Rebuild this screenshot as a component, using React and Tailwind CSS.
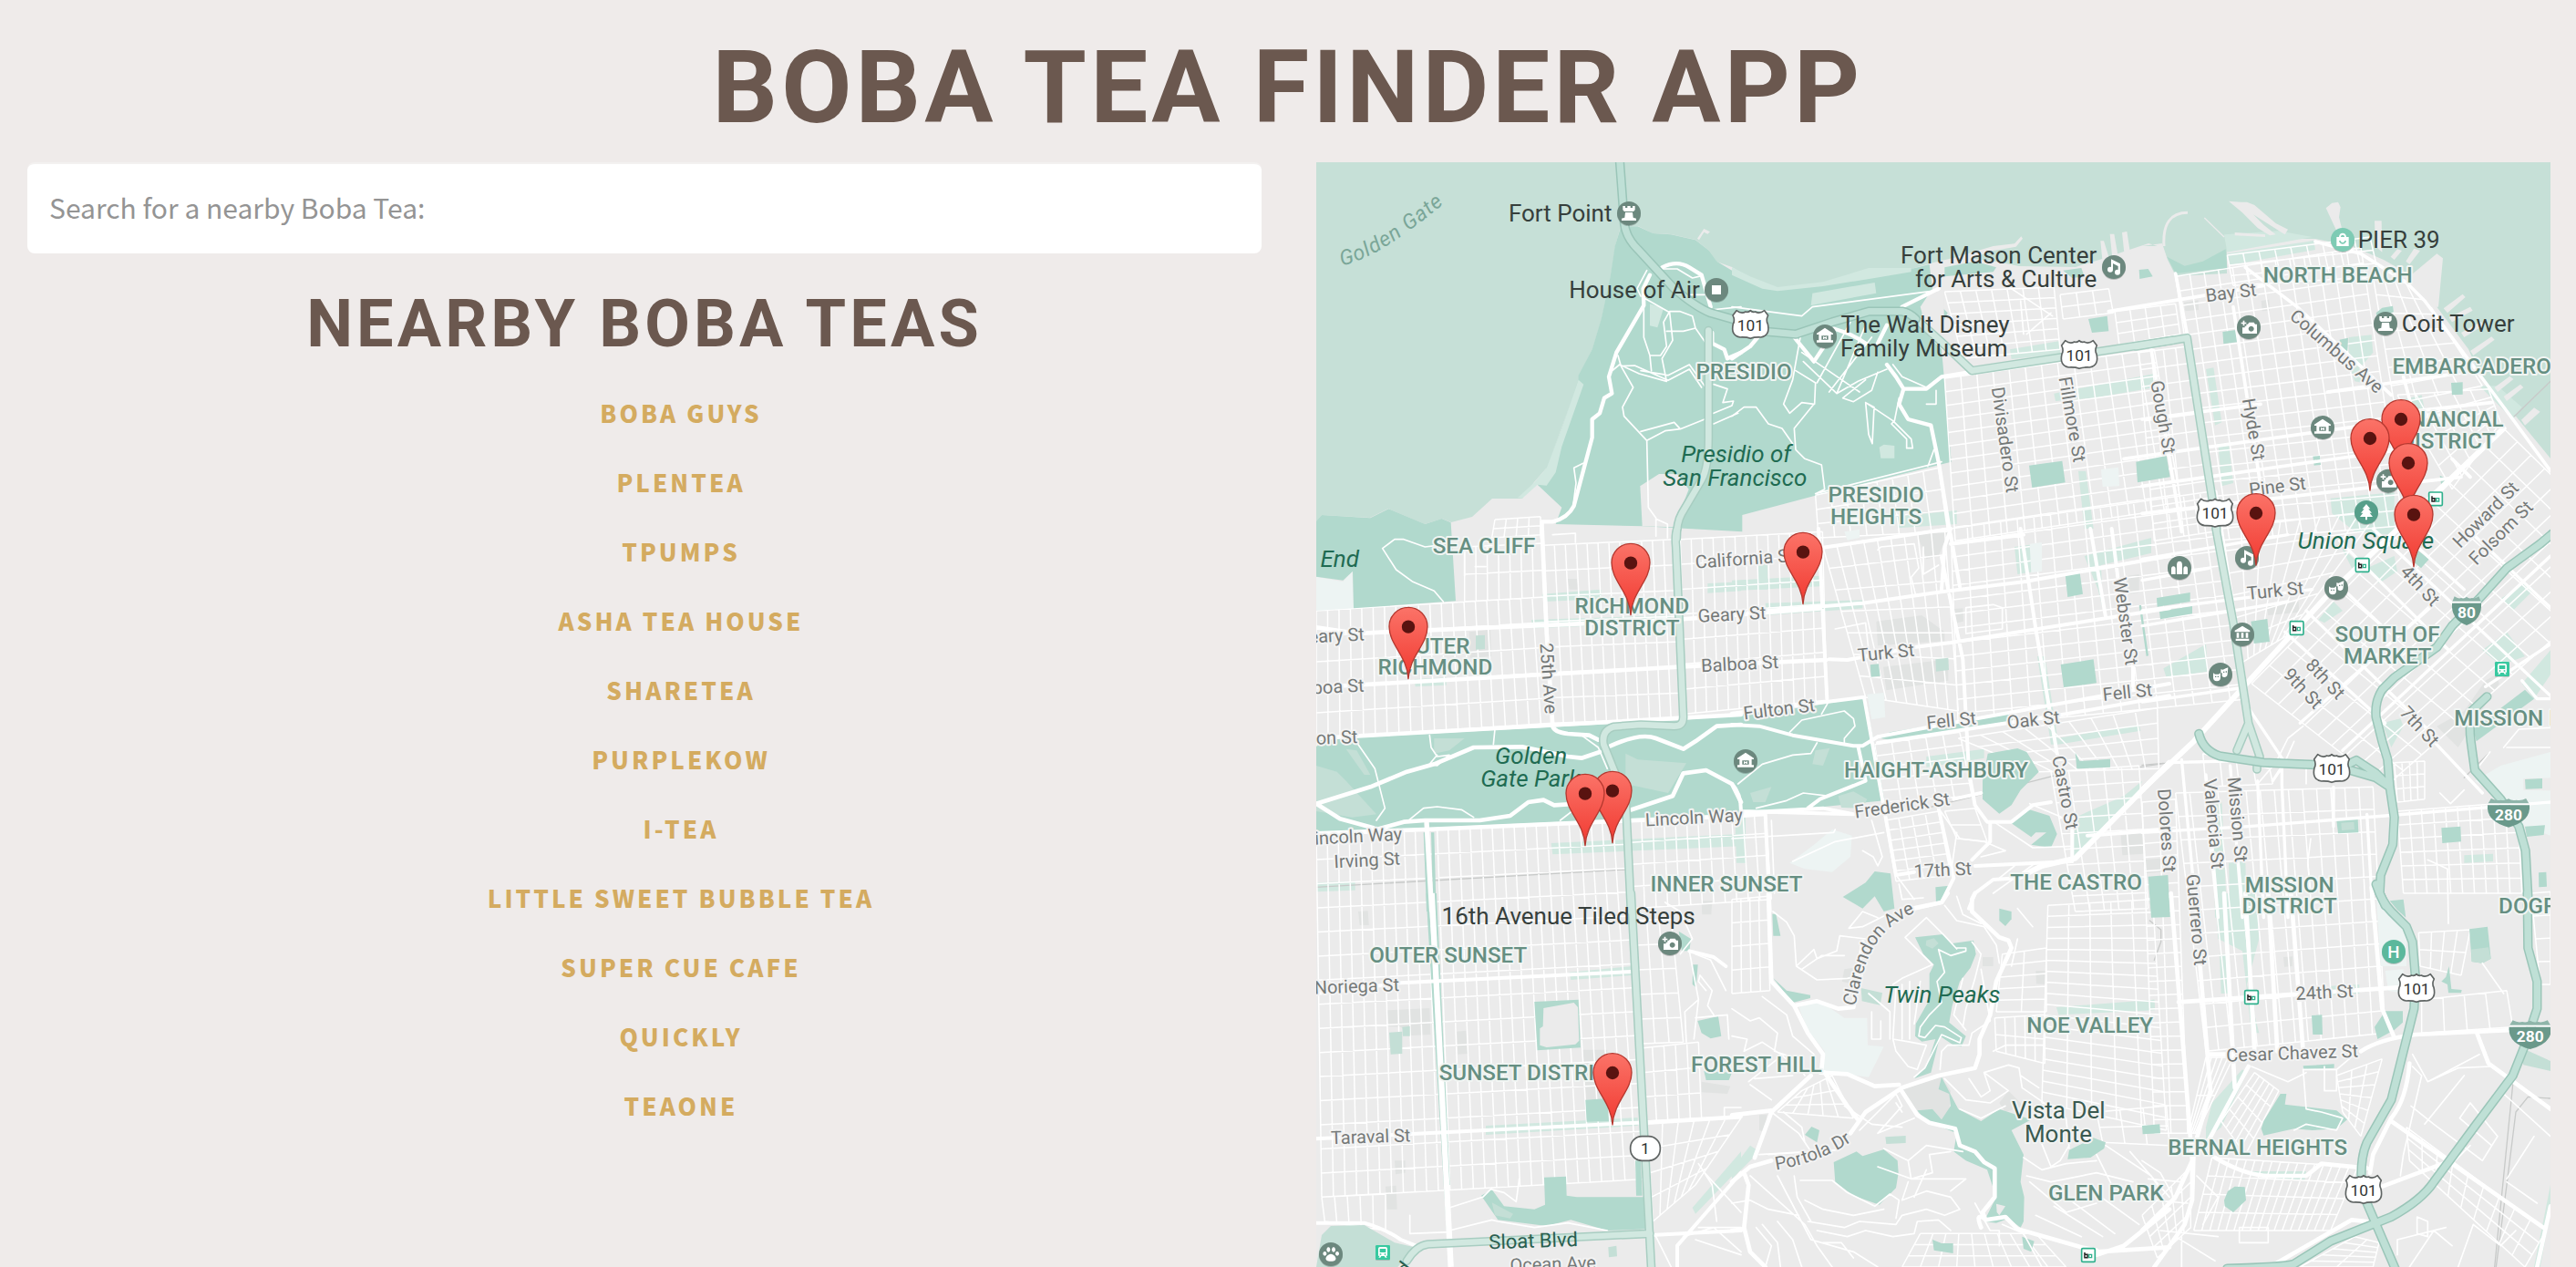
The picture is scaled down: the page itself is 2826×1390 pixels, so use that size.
import React from "react";

const SHOPS = [
  "Boba Guys",
  "Plentea",
  "TPumps",
  "Asha Tea House",
  "Sharetea",
  "PurpleKow",
  "i-Tea",
  "Little Sweet Bubble Tea",
  "Super Cue Cafe",
  "Quickly",
  "TeaOne",
];

/* ---------- map geometry: nine tiles, each drawn at three units per pixel ---------- */

const ORIGIN = {
  A: [1430, 170], B: [1900, 170], C: [2350, 170],
  D: [1430, 580], E: [1900, 580], F: [2350, 580],
  G: [1430, 980], H: [1900, 980], I: [2350, 980],
};

function Tile({ id, children }) {
  const [x, y] = ORIGIN[id];
  return <g transform={`translate(${x} ${y}) scale(0.33333)`}>{children}</g>;
}

// Street grid spread evenly over a four-cornered block.
function gridPath([tl, tr, br, bl, cols, rows]) {
  const mix = (a, b, t) => [a[0] + (b[0] - a[0]) * t, a[1] + (b[1] - a[1]) * t];
  const seg = (a, b) => `M${a[0].toFixed(1)} ${a[1].toFixed(1)}L${b[0].toFixed(1)} ${b[1].toFixed(1)}`;
  let d = "";
  for (let i = 0; i <= cols; i++) d += seg(mix(tl, tr, i / cols), mix(bl, br, i / cols));
  for (let j = 0; j <= rows; j++) d += seg(mix(tl, bl, j / rows), mix(tr, br, j / rows));
  return d;
}

const PRESIDIO = {
  A: [
    "1045,235 1100,235 1150,258 1210,262 1290,280 1335,315 1360,350 1410,380 1560,445 1710,430 1860,385 2000,375 2060,360 2070,440 2030,500 2060,600 2100,640 2110,750 2132,1010 1690,1120 1444,1185 1444,1240 1115,1222 830,1215 850,1160 770,1085 800,1030 850,900 905,740 905,725 950,640 980,540 1010,400 1025,300",
  ],
};

const PARKS = {
  B: [
    "978,1022 1087,1007 1097,1078 988,1095",
    "1173,540 1235,530 1240,580 1185,585",
    "700,370 800,350 870,370 860,385 700,400",
    "1090,380 1150,372 1160,400 1120,405",
    "650,500 680,490 710,520 690,560 660,540",
    "1340,378 1370,375 1385,400 1342,408",
  ],
  C: [
    "-20,1010 80,990 92,1060 -15,1078",
    "265,582 315,575 318,615 268,622",
    "82,335 110,390 280,372 275,310 200,350 140,365",
    "650,608 678,602 676,645 652,640",
    "1017,750 1055,748 1055,788 1020,790",
    "770,520 790,503 825,497 828,517 775,540",
    "562,992 585,990 588,1020 566,1022",
    "980,1055 1010,1070 985,1090",
  ],
  D: [
    "42,-25 60,-45 220,-35 280,-65 400,-15 455,-33 485,-20 501,238 165,262 162,140 130,170 42,158",
    "42,695 1250,630 1630,590 1850,555 1912,895 1660,920 1410,940 230,992 42,1005",
    "395,1000 405,1000 422,1260 405,1260",
    "420,1000 430,1000 437,1260 427,1260",
  ],
  E: [
    "490,690 520,670 920,605 925,632 520,695",
    "842,740 940,723 970,735 1010,800 950,860 920,910 880,938 825,890 825,830",
    "918,968 980,925 1045,945 1070,1005 1050,1050 985,1040 1035,1000 1000,1000 985,1015",
    "1082,447 1190,430 1200,508 1092,522",
    "1097,150 1145,145 1155,215 1105,225",
    "1130,737 1145,765 1245,758 1245,785 1135,790",
    "365,1212 440,1165 470,1128 522,1135 535,1250 500,1260 470,1210 430,1250",
    "670,1180 715,1175 700,1220 672,1230",
    "455,448 483,445 488,485 458,488",
    "1340,252 1347,252 1371,418 1364,420",
  ],
  F: [
    "48,228 158,210 158,240 50,257",
    "57,272 165,255 165,280 60,298",
    "358,305 412,297 420,372 368,378",
    "640,960 710,955 712,1000 645,1003",
    "985,985 1048,980 1050,1030 988,1035",
    "1260,825 1317,822 1317,855 1262,857",
    "1260,980 1326,976 1322,1008 1266,1014",
    "20,1145 85,1140 92,1278 30,1280",
    "1305,1132 1330,1130 1332,1178 1306,1180",
    "905,70 945,100 918,130 895,110",
    "815,1225 860,1220 868,1280 840,1255",
    "1090,660 1260,530 1290,560 1100,700",
  ],
  G: [
    "760,357 905,350 912,508 770,517",
    "928,680 1000,675 1005,750 932,752",
    "585,995 620,975 660,1030 760,1040 795,1025 792,935 864,932 866,995 900,1000 1130,1000 1140,1105 1000,1110 880,1075 800,1095 640,1075",
    "1235,125 1275,150 1270,190 1245,190",
    "1282,235 1298,235 1292,310 1280,300",
    "1297,420 1365,405 1375,470 1340,478 1310,460",
    "1318,585 1410,590 1400,615 1325,615",
    "1092,880 1110,880 1115,995 1095,995",
    "403,0 411,0 490,1230 478,1230",
    "430,0 438,0 482,960 474,960",
  ],
  H: [
    "603,145 695,135 725,165 795,155 803,200 785,245 750,290 725,370 715,425 770,470 755,505 730,500 685,470 655,590 600,610 640,570 670,480 625,488 603,470 605,430 650,350 650,265 665,235 630,200",
    "690,605 745,710 820,750 880,710 985,745 920,780 960,860 950,950 962,1000 960,1080 950,1100 910,1070 870,1085 830,1080 870,1000 840,910 770,880 730,850 740,790 640,750 610,715 660,710 690,745 720,700 715,660 680,645",
    "335,885 410,850 430,865 500,843 545,880 548,920 540,970 485,1025 400,995 340,950",
    "1105,875 1110,845 1190,805 1230,820 1225,840 1180,870",
    "880,50 920,60 920,85 900,108 880,90",
    "133,68 145,68 160,140 136,140",
    "240,795 262,768 288,780 280,820",
    "135,278 180,320 258,335 258,345 200,360",
    "660,1140 690,1152 728,1152 728,1185 665,1175",
    "955,1130 995,1145 985,1180 960,1170",
    "1350,765 1408,760 1410,790 1352,793",
  ],
  I: [
    "400,750 455,660 475,660 470,695 640,715 675,745 640,775 560,780 500,775 400,797 392,775",
    "270,1010 282,980 305,965 338,967 342,1010 300,1050 272,1030",
    "765,440 800,388 858,388 858,425 830,450 775,480",
    "1077,118 1137,110 1148,215 1120,230 1085,225",
    "985,290 1000,275 1010,240 1018,315 1052,318 1050,328 1008,328 1005,300",
    "558,402 592,400 594,465 562,465",
    "530,568 632,562 632,575 532,580",
  ],
};

const PALE = {
  A: ["1140,490 1185,505 1165,568 1140,562", "905,740 922,755 850,960 830,1045 800,1088 770,1085 720,1130 705,1128 760,1078 800,1030 850,900"],
  B: ["265,455 470,420 475,455 260,495", "485,962 500,953 535,957 535,998 490,998", "0,370 60,400 150,435 300,418 450,372 590,372 590,385 470,405 300,432 150,448 100,440 0,395", "1060,785 1390,720 1392,765 1190,800 1065,810", "1140,1040 1165,1040 1190,1230 1160,1230", "540,1190 740,1170 740,1215 545,1228", "915,640 1080,612 1080,655 920,672"],
  C: ["210,705 235,700 262,880 240,890", "250,950 285,950 300,1080 262,1090", "280,325 565,282 570,312 290,362", "680,600 755,592 760,650 700,720 680,700", "840,810 920,790 930,840 860,850", "620,1130 830,1110 830,1250 700,1240 625,1180", "270,262 450,250 560,270 280,320", "1170,760 1250,830 1220,870 1110,760", "680,690 745,720 780,760 700,745"],
  D: ["785,215 980,200 980,232 790,240", "750,300 1210,285 1210,310 755,328", "1330,180 1440,175 1440,205 1330,212", "365,495 470,490 470,515 368,520", "815,1035 1440,1005 1440,1045 820,1072", "42,1165 170,1160 170,1190 42,1195"],
  E: ["0,170 290,155 290,190 0,205", "110,245 430,235 430,262 115,285", "930,60 1000,50 1000,140 940,150", "1160,90 1380,30 1380,80 1215,120 1220,260 1205,200", "1005,420 1030,420 1075,710 1050,710", "640,750 830,725 830,755 640,785", "1070,690 1340,645 1345,665 1075,710", "1130,950 1290,880 1350,830 1340,860 1200,1010 1120,1100", "10,950 45,950 45,1100 15,1100", "85,95 118,95 118,200 88,200"],
  F: ["740,130 830,90 840,140 780,180", "580,300 630,240 660,270 600,310", "70,460 210,380 215,470 80,490", "1120,400 1200,340 1260,420 1180,450", "1180,230 1260,180 1290,200 1220,270", "790,640 850,625 860,650 820,720", "235,900 262,900 280,1280 240,1280", "285,1100 340,1095 345,1280 290,1280", "1060,1075 1155,1070 1155,1095 1060,1100", "1250,510 1344,400 1344,480 1290,560", "655,60 720,120 690,130"],
  G: ["875,260 1080,240 1080,270 880,285", "600,765 1100,738 1100,765 600,795", "1280,1035 1440,850 1440,900 1290,1055"],
  H: ["1068,375 1390,350 1392,385 1075,400", "0,910 60,830 90,850 0,940"],
  I: ["240,0 375,0 385,150 345,300 385,460 360,460 330,190 250,150", "210,770 230,690 330,580 345,590 260,770 210,810", "350,915 540,915 535,945 360,930", "1290,1230 1344,960 1344,1050 1310,1230", "255,200 280,200 290,330 260,330", "620,305 715,300 715,330 625,335", "0,355 40,350 42,380 0,385"],
};

const MINT = {
  D: ["42,780 110,800 140,830 240,940 160,950 42,930", "430,690 530,690 480,730 430,740", "1060,740 1100,760 1260,772 1200,870 1060,840", "140,725 175,730 220,810 200,810", "567,352 597,350 597,396 567,398"],
  E: ["275,730 322,722 300,780 265,775", "350,880 400,865 445,890 430,920 360,918", "60,870 130,850 110,900 70,900", "670,430 712,425 714,465 672,470"],
  F: ["655,968 697,965 699,990 657,993"],
  G: ["60,1125 90,1095 200,1092 240,1115 300,1150 365,1165 310,1230 42,1230", "620,1018 690,1055 680,1070 630,1060", "282,458 325,455 325,528 287,530", "325,440 350,437 350,470 327,470", "1003,1165 1030,1160 1032,1195 1005,1198"],
  H: ["505,802 572,798 572,822 508,825", "425,312 495,328 488,368 428,355", "640,155 665,148 680,165 660,182 638,172"],
  I: ["1240,505 1344,552 1344,585 1255,565", "1083,185 1140,178 1148,215 1120,230 1085,225"],
};

const GREY = {
  D: ["545,340 615,333 618,420 548,425", "870,165 900,165 905,200 875,200"],
  E: ["475,305 625,285 700,340 700,370 480,385", "498,455 712,430 712,500 508,532", "610,20 715,5 680,90 640,100", "725,265 760,262 762,305 730,312", "1280,1010 1350,1000 1355,1070 1285,1075", "1300,155 1340,150 1340,210 1305,215"],
  C: ["138,485 185,478 186,510 142,514", "392,480 418,476 420,512 395,514"],
  F: ["410,255 515,240 517,275 415,285", "1060,600 1130,500 1165,480 1175,510 1040,720 1020,700 970,650", "0,1090 60,1085 62,1130 10,1135"],
  G: ["275,385 415,378 418,465 355,468 320,440 280,438", "505,455 535,452 540,528 508,530", "920,515 1000,515 1005,680 930,680", "180,60 212,58 215,105 185,105", "270,965 305,962 308,1040 275,1040", "300,880 335,880 335,920 303,925", "1310,620 1405,635 1395,660 1310,655", "1310,25 1345,25 1342,70 1312,70"],
  H: ["560,645 690,605 720,650 715,720 690,745 660,710 610,715", "370,250 400,245 400,300 362,290", "825,210 860,210 860,240 825,240", "880,690 910,650 960,700 900,720", "90,730 115,728 110,785 90,780", "1000,255 1035,255 1035,300 1002,298"],
  I: ["465,210 495,208 495,240 468,242"],
};

const CAMPUS = {
  D: ["42,158 130,175 160,140 165,262 42,270"],
  E: ["445,545 500,540 505,620 460,628", "190,1100 270,1040 330,990 395,1010 390,1080 330,1130 240,1120", "370,10 420,2 420,30 380,38", "980,50 1020,45 1020,140 985,145"],
  F: ["1095,830 1180,780 1344,735 1344,820 1255,822 1255,860 1344,862 1344,1010 1260,980 1170,880"],
  B: ["1215,1035 1272,1028 1275,1090 1220,1092"],
  H: ["220,375 290,355 370,410 445,410 447,500 500,505 450,605 300,585 305,520 250,450"],
  I: ["770,0 800,50 870,120 870,240 785,240", "800,255 860,250 860,330 810,320"],
};

const LAND = {
  A: ["1108,1090 1170,1050 1230,1050 1268,1100 1220,1225 1115,1222", "1296,275 1318,243 1338,253 1330,260 1318,254 1302,280"],
  B: ["1213,283 1224,283 1245,350 1220,355", "1244,260 1258,260 1272,340 1252,340", "1284,255 1300,252 1312,330 1292,330", "740,335 860,300 930,292 952,268 957,275 935,302 860,315 760,350", "630,500 665,465 698,440 698,700 690,600 650,560 622,540"],
  C: [
    "285,152 330,190 380,240 420,265 440,262 400,230 330,160 322,168 470,262 480,245 440,225 370,165 345,155 325,155",
    "605,175 625,158 645,155 653,172 648,205 658,245 640,250",
    "765,217 788,217 790,320 768,300", "840,310 855,315 830,345 818,335", "895,308 915,315 880,360 868,350",
    "970,325 990,340 975,500 950,500 880,425 880,400",
    "1055,458 1064,468 1005,520 992,505", "1080,500 1088,512 1020,550 1010,535", "1115,548 1125,560 1060,600 1050,585", "1150,598 1160,608 1090,660 1080,645",
    "1210,728 1222,738 1170,780 1160,765", "1245,755 1255,765 1200,810 1190,795", "1290,832 1310,845 1260,890 1248,872",
    "305,255 405,262 405,270 305,265",
  ],
  G: ["790,378 890,360 903,375 907,485 895,497 800,507 778,500 778,445 788,438"],
  H: ["870,1022 900,1030 880,1060 872,1050"],
};

const GRIDS = {
  D: [
    [[42, 270], [790, 225], [820, 640], [42, 690], 20, 5],
    [[530, 60], [790, 48], [795, 225], [530, 240], 7, 2],
    [[790, 55], [1220, 35], [1245, 625], [820, 640], 12, 7],
    [[1240, 35], [1708, 10], [1722, 565], [1255, 610], 13, 7],
    [[630, -30], [780, -40], [780, 20], [620, 30], 4, 2],
  ],
  E: [
    [[300, 60], [700, 0], [745, 600], [440, 555], 9, 7],
    [[720, 0], [1595, -125], [1700, 560], [745, 655], 16, 14],
    [[745, 690], [1400, 590], [1405, 790], [1010, 800], 9, 4],
    [[470, 710], [750, 670], [790, 880], [498, 900], 5, 5],
    [[505, 960], [680, 930], [720, 1140], [540, 1160], 4, 6],
    [[1050, 800], [1340, 780], [1370, 1250], [1130, 1260], 5, 9],
    [[700, 930], [800, 920], [840, 1030], [740, 1020], 1, 2],
  ],
  B: [
    [[700, 450], [1060, 435], [1080, 640], [760, 670], 7, 6],
    [[700, 735], [1390, 640], [1480, 1160], [735, 1270], 13, 12],
    [[275, 1120], [680, 1030], [710, 1240], [285, 1260], 8, 3],
    [[1080, 460], [1240, 440], [1255, 520], [1090, 540], 3, 2],
  ],
  C: [
    [[-90, 515], [110, 490], [125, 590], [-75, 625], 4, 3],
    [[-10, 650], [150, 630], [235, 1240], [40, 1270], 4, 11],
    [[110, 400], [720, 305], [860, 1220], [240, 1270], 13, 18],
    [[280, 330], [750, 270], [780, 400], [300, 430], 9, 3],
    [[760, 400], [905, 430], [1120, 760], [830, 820], 4, 7],
    [[840, 790], [1140, 770], [1180, 880], [1020, 1100], 5, 4],
  ],
  F: [
    [[1190, -330], [1640, 110], [800, 850], [360, 510], 10, 14],
    [[260, 0], [780, -60], [480, 350], [330, 440], 8, 6],
    [[200, 740], [420, 790], [430, 840], [210, 850], 4, 1],
    [[830, 770], [930, 765], [930, 890], [840, 900], 4, 3],
  ],
  G: [
    [[42, -190], [1055, -240], [1135, 940], [60, 1000], 28, 15],
    [[1075, -240], [1520, -270], [1540, 20], [1085, 50], 12, 4],
    [[1090, 90], [1210, 85], [1250, 490], [1110, 495], 3, 5],
    [[1110, 510], [1300, 490], [1310, 740], [1125, 750], 5, 3],
    [[1130, 760], [1440, 740], [1290, 960], [1150, 1080], 6, 4],
    [[60, 1000], [270, 990], [270, 1110], [70, 1080], 5, 1],
  ],
  H: [
    [[1040, 40], [1385, 20], [1430, 780], [1020, 690], 5, 18],
    [[865, 410], [1030, 400], [1030, 560], [870, 520], 5, 2],
    [[890, 200], [1035, 180], [1035, 390], [870, 390], 2, 5],
    [[1200, 720], [1430, 700], [1440, 830], [1220, 820], 3, 2],
    [[0, 20], [118, 10], [125, 320], [0, 330], 4, 4],
    [[620, 1120], [1000, 1120], [1100, 1230], [560, 1230], 9, 3],
    [[230, 650], [330, 600], [400, 740], [150, 720], 5, 3],
  ],
  I: [
    [[0, -300], [110, -310], [150, 790], [40, 790], 2, 24],
    [[110, -330], [760, -350], [800, 460], [210, 520], 14, 11],
    [[840, -270], [1235, -300], [1250, 0], [860, 0], 10, 6],
    [[910, 130], [1080, 120], [1050, 270], [915, 240], 4, 2],
    [[920, 350], [1200, 320], [1220, 440], [920, 460], 4, 1],
    [[640, 600], [790, 545], [720, 800], [660, 720], 3, 6],
    [[230, 870], [710, 900], [620, 1110], [170, 1110], 17, 4],
    [[370, 590], [450, 650], [340, 860], [260, 750], 5, 4],
    [[150, 790], [210, 540], [300, 540], [180, 790], 2, 5],
    [[870, 770], [1330, 1110], [1260, 1230], [880, 880], 9, 3],
    [[0, 1060], [160, 900], [160, 1100], [50, 1200], 5, 4],
    [[1280, 0], [1344, -5], [1344, 300], [1310, 300], 1, 4],
    [[520, 1230], [700, 1130], [780, 1150], [760, 1230], 5, 2],
  ],
};

const LANES = {
  A: "M1120,465V600L1140,660H1175L1195,630 1185,550 1205,515 1240,515 1280,530 1290,570 1250,580H1195M1120,470L1205,518 1215,610 1180,670 1195,745 1105,720 1040,690 1010,715M1035,660L1045,695 1085,765 1050,830 1055,860 1130,940 1135,1160 1160,1195V1255M1110,710L1200,725 1270,690 1320,760M1045,695L1090,693 1200,742 1270,705 1310,765M1140,660L1145,710M1110,910L1220,880 1240,902 1320,870M1130,940L1190,908 1240,902M1350,850L1410,825 1415,810 1380,815 1395,770 1350,755M1350,885L1430,850M1180,375L1230,375 1280,405 1310,398M1225,440L1260,460H1320M1130,380L1098,440 1110,465M920,1015L890,1030 897,1080 888,1150M1340,510L1440,500M1290,570L1325,620M1160,1198L1198,1215V1260",
  B: "M0,500L230,530 265,500 680,445M225,600L200,740 170,820 190,850 230,815 270,820 205,900 210,970 240,1000 295,1020 305,1100 275,1115M0,860L40,830 80,830 120,885 165,900 200,950M235,680L345,785 440,560M280,750L390,550M320,780L460,600M210,710L275,750 272,820M345,785L415,745 510,705M365,800L440,740M365,800L400,812 460,775 480,715M440,815L450,920 462,950 468,830ZM440,815L530,875 590,935 595,965 575,965V935L525,885 535,875 550,800M530,690L560,730 640,765 680,735M230,650L420,780M640,820H672V775M275,1115L690,1010M665,970L645,1025M905,430L1055,530M950,480L960,590M1050,520L970,590",
  D: "M260,65L300,35 330,35 400,60 440,55M260,65L305,135 360,175 430,205 460,240M415,680L420,720 440,750 480,745 440,780 415,775 440,745M630,660L625,710M180,710L235,790 268,920 240,960M340,965L395,920 440,915 520,925 560,950M915,680L970,720 1000,790M530,155V60M565,125H600M820,20L895,15V45M845,960L890,925",
  E: "M190,670L230,630 370,600 400,625 405,650 370,690V710M295,610L315,575M280,705L260,740 200,745 100,775 20,840M80,920L180,895 235,870 320,880M340,990L335,1000 0,1020M480,70L490,60 600,50 615,130 590,160 605,220M630,60V150L680,120M770,340V260L860,250 890,260V330L770,345M340,330L440,310 450,400M870,970L990,1050 1120,1045M980,905L1110,960M680,920L750,1020 830,1030 900,1060 820,1080M430,1060L465,1080 480,1110 495,1080 460,960M550,1170L560,1220 630,1215M740,1000L720,1140M540,1140L600,1220M130,960L140,1200M200,1095L340,1030 500,1000M930,1110L880,1150M1000,1100L860,1200",
  F: "M380,840L440,770 480,690 530,650M540,840V780M1190,720L1240,660 1344,655M1200,720H1344M1110,780L1145,735M980,870L1015,905 1060,860M555,1020L545,1100 555,1200M460,790L500,700",
  G: "M480,1035L590,1000 620,970M480,1110L620,1075 640,1080 760,1100 870,1085 1000,1110M620,975L660,985 700,1015 710,940M350,1120L480,1115M350,1060V1120M1190,30L1240,60 1280,150 1240,200M1270,190L1300,350 1255,390 1260,490M1290,200L1340,220 1390,320M1305,270L1345,320 1330,370 1350,400M1300,350L1285,480M1305,270L1300,290 1325,320M1290,410L1395,400 1400,480M1320,920L1440,1050M1300,1100L1440,1100M1250,1130L1350,1100 1440,1180M1300,890L1345,960 1360,1080M1385,740V705H1440M1160,1130L1210,1230M1290,1140L1440,1190",
  H: "M135,60L180,95 205,140 212,240 280,285 380,280 430,270M212,240L270,185 280,215 345,190 355,140 440,150M230,250L295,205 370,205M385,115L430,60 480,80M385,115L430,110 500,75M570,145L640,80 700,140M570,145L660,235 560,280 530,300M740,180L770,180 770,190 720,205 680,185 700,260 675,290 690,360 650,400 620,440 615,470 635,475 670,435 700,440 755,475 750,492 690,465 635,575 600,605M700,140L740,183M700,40L740,90 830,110 870,170 880,230M740,10L760,70 820,100M790,160L820,200 800,280 770,380 760,440M760,280L730,400 770,450M820,250L850,420 790,460 780,500 710,500 690,520 685,580M540,310L530,480 590,490 640,500 610,580 580,570 540,520 530,480M560,300V480M585,290V480M620,290L600,430M450,330L520,390V480M460,390V480H490V420M0,380L60,420 90,410 150,460 140,520 200,540 240,600M0,470L50,480 40,520 100,490 160,530 220,580M100,340L180,400 200,470 270,530M55,620L170,530M60,630L130,680M75,610L200,600M170,720L230,770 240,820M130,720L220,790 260,850 120,860M90,860L350,845M420,780L540,660 560,700 480,790 600,740M540,690L560,720M500,840L580,880 590,940 660,920 650,860 720,850M580,880L640,830 760,850M580,950L560,1010 640,980 720,1000 750,1040 700,1060 640,1040 560,1060 540,1090 420,1080 370,1100 250,1080M150,930L260,1140 400,1180 480,1230M225,945H330L380,985 470,1030 520,990 550,1010 540,1070M240,1010L300,1040 400,1060 500,1040M205,930L215,1000 260,1080M60,930L150,1010 240,1090 280,1160 330,1230M0,1020L60,1010 120,1040 220,1060M280,1110L380,1130 440,1110 530,1130 600,1120 610,1080 680,1075 720,1110M300,1150L360,1150 400,1200M80,1100L130,1160 110,1230M100,1090L150,1150 160,1230M150,1080L200,1140 230,1230M370,700L460,760 560,770M700,610L770,680 850,690 910,650 830,590M780,610L820,670 850,650 830,590 910,565 945,575 955,640 1100,740 1110,840M750,710L820,740 900,700M1110,830L1080,880 1050,900 1010,800M960,870L1020,910 1100,890 1200,880M970,930L1050,950 1200,920 1320,950M1230,830L1380,930 1400,960M1200,860L1260,980M980,950L1100,1050 1200,1020M1000,1060L1150,1130M1060,1030L1220,1130M1100,1000L1260,1120M1160,960L1340,1090M890,1090L960,1120 1020,1230M640,910L600,1000M800,1020L850,1110H880V1160M950,600L1010,640M1310,850L1440,1000M860,520L900,500 1030,500M480,900L590,940 770,940 720,980M940,150L920,240M940,50L990,110",
  I: "M890,530L940,620 1040,575 1145,570M890,570L920,600 860,860 850,930M885,700L960,760 1120,880 1170,800 1080,690 1045,740 1150,830M1120,230L1190,330M940,620L1110,530M700,530L640,580M500,780L540,760 640,780 660,740 590,720 540,710 530,580H640V650M360,570L480,620 540,590M600,570V650H640M950,960L1080,830M1090,1090L1180,1160 1230,1110M1090,1090L1040,1230M1200,950L1300,1020M905,1065L940,1080V1130L905,1120ZM940,-110L1005,-80 1008,100M1000,1100L840,1140V1190M880,1230L960,1110 1020,1160M1190,660L1344,800M1290,800L1200,940M930,760L1060,600M320,1100H415V1150H320ZM110,1130L240,1210M180,930L250,1000 200,1090M60,1110L250,1130M130,1130V1230M0,880L60,920 110,1010M20,940L130,950M30,1010L150,1020",
};

const ROADS = {
  A: ["M1345,585V620L1385,640 1395,670 1440,650M1140,395L1118,440 1120,495 1030,650 1005,730 1015,785 990,800 975,850 950,870V930L890,1155Q870,1195 820,1207H785V1260M1180,370Q1230,345 1270,370L1310,395 1340,500", 13],
  B: ["M0,670L60,630 85,600M205,600L270,680 300,635M330,570Q400,590 440,620M560,500L650,455 680,440M510,560L480,620M510,690L540,730 565,770 550,820 580,870 655,890 680,1010 720,1260M565,770L640,770 690,730 780,715", 13],
  C: ["M-110,515L400,430M340,370L510,500 820,790M570,285L720,325 870,420 930,480 1220,870 1344,1040M0,870L390,820M610,780L1030,720M1150,815L830,850M-60,1000L1020,850M300,500L390,1090M30,640L130,1240M110,390L150,600M0,1090L850,970M0,1180L1050,1060M860,730L890,840M1020,1000L1080,1060", 11],
  D: ["M785,0L800,340 820,650Q825,670 870,675L940,680 970,695M42,325L180,345 270,340 1220,300 1700,262M42,522L1290,452 1720,432M42,690L1440,612M42,905L220,850 340,800 430,775 560,720 720,718 870,750 915,755 975,735M42,905L120,955 230,985M240,990L330,965 400,960H580L680,945 740,900 790,893 825,910 980,900M42,1003L400,990 1440,945M1010,715Q1110,670 1160,690L1250,725 1290,700 1360,650 1440,645M1080,925L1215,880 1250,805 1325,795 1410,840 1440,900", 14],
  E: ["M285,0L313,560M300,62L720,0M115,270L430,245 690,208 960,175 1440,90M690,200L700,60 720,0M690,95L760,430 780,800 800,910 840,965 920,965 990,910 1050,900M720,50L960,20M950,0L1000,330 1070,740M1250,0L1270,160M1180,0L1230,290M320,430L380,432 600,390 720,375 1440,262M0,608L430,555M435,555L540,1140 600,1130M0,645L90,650 200,680 400,715 430,715 480,685 640,655 1440,510M480,705L1100,610 1440,550M415,715L440,830 290,890 250,920M30,935L300,920 400,940M0,840Q30,870 30,930L400,940M40,945L110,940 125,1260M680,920L730,1150 690,1230 560,1260M850,970L850,1030 790,1090M1120,980V1080M800,1110L1120,1095M1170,1010L1440,990M940,1150L860,1155 800,1200 780,1250M720,20L750,190M1320,450V520M730,890L820,870", 12],
  F: ["M0,100L480,20M0,170L220,130M0,270L560,200M0,320L480,240M0,570L320,525M620,160L800,330M650,40L1010,400M760,0L1344,550M1070,0L1344,260M840,0L1060,200M470,340L800,640M540,270L960,680M330,560L470,770 430,830M660,730L1344,90M520,640L960,250M90,770L280,765M0,1000L350,980 800,945 1344,900M130,760L180,1280M210,810L250,1280M290,780L330,1280M460,760V840L480,1280M380,830L400,1280M1344,380L1130,520M960,700L1120,870M1250,500L1300,560 1344,560M740,940L760,1280M630,850V980", 10],
  G: ["M42,1085H200Q270,1105 320,1140L370,1160M42,330L320,295 1080,258M42,808L1100,755 1440,735M1145,1125L1440,1110M1230,1230V1160L1300,1080 1440,920M1270,190L1350,210 1390,240", 12],
  H: ["M120,0L130,290 205,370 250,460 300,530 295,580M205,370L280,355 350,380 400,375M400,375L430,160M0,950L60,900 130,880M390,790L440,720 560,640 680,600 800,575 815,530V480L850,400 870,290 920,180 910,155 880,145 790,60 790,20 800,0M290,590L380,595 470,635 550,630M305,590L380,700 415,745M555,645L610,730 650,755 735,775 750,830 800,850 830,885 865,905V1000L825,1050 835,1075 900,1065 940,1105 1150,1165 1200,1175M40,920L55,960 40,1100 60,1180 110,1230M1200,1190L1290,1160 1440,1040M260,600L130,720 75,870M0,730L130,715M1200,1180L1440,1165M570,55L690,30 710,0M0,1110L40,1105M830,1070Q800,1050 820,1100", 14],
  I: ["M95,0L165,880 110,1000 0,1110M190,230L225,650 170,840 165,1010 140,1090 40,1230M120,358L840,310M220,530H280M720,520Q780,480 900,465L1220,450M755,-20L790,380 830,475M350,570L210,830M270,0L305,640M415,0L445,520M340,0L370,520M490,0L530,520M240,870Q340,930 420,930H540L590,890 740,905M880,560Q870,680 820,740L760,860 750,920M820,750L1320,1100M790,965L990,890M1100,455L1140,560 1344,710M1300,1230L1344,1030M420,1230L690,1075 740,1080", 14],
};

const MARKET = { F: "M1190,-330L600,230 170,700 0,860", E: "M1440,770L1130,1085 1020,1110 940,1150" };

const ARTERIAL = {
  A: "M1333,578V930Q1333,1030 1310,1070L1245,1180Q1228,1210 1228,1262",
  D: "M1230,0Q1222,20 1226,60L1250,620Q1250,650 1220,650L1110,645 1020,652Q980,665 988,710L1020,790 1060,880 1078,1260",
  G: "M1078,0L1145,1240M340,1210Q370,1160 410,1155L1140,1120",
  B: "M600,535L700,625 790,710 1450,610",
  C: "M-20,630L148,602 232,1140 245,1232",
  F: "M243,0L300,310 350,640 387,750M350,640L312,730M378,760V792",
};

const FREEWAY = {
  A: "M1040,10L1056,225Q1060,270 1100,310L1220,440Q1290,500 1340,520L1440,548",
  B: "M100,580L210,590 330,550 450,515H560Q585,520 605,540",
  F: "M187,675Q200,730 255,748L400,770 570,777M685,772L705,762 770,805 815,850M685,795L770,820 815,850M1370,0L1310,50 1200,130 1110,230 1020,320 970,390 830,490 790,530Q765,570 770,620L790,700 808,760 815,850 830,950 825,1040 785,1140 782,1200 800,1240M1135,553L1085,600Q1075,640 1082,700L1095,795 1180,890 1240,980 1262,1060 1270,1210",
  I: "M770,-30Q790,30 820,60L870,110 890,160 900,280 895,380 820,680 740,820Q718,870 722,950L740,1020 835,1240M1268,0L1270,180 1300,290V380L1260,500 1220,600 1100,760 960,950Q920,1010 820,1065L620,1145 500,1220Q470,1230 280,1235",
};

const RAIL = {
  C: "M1344,745L1225,860", E: "M640,920L820,875 1080,808M1340,785L1440,770", D: "M42,1180L1060,1122",
  I: "M1220,630L1160,1230M1344,675L1270,670 1230,720 1200,960 1165,1230M25,90L62,120V160L40,220", F: "M0,778L70,772M1140,740L1060,820",
};

/* label: [text, centre x, centre y, rotation] */
const HOODS = {
  A: [["PRESIDIO", 1449, 711]],
  B: [["PRESIDIO", 474, 1117], ["HEIGHTS", 474, 1189]],
  C: [["NORTH BEACH", 644, 393], ["EMBARCADERO", 1085, 694], ["FINANCIAL", 1006, 867], ["DISTRICT", 1006, 940]],
  D: [["SEA CLIFF", 594, 55], ["RICHMOND", 1081, 252], ["DISTRICT", 1081, 324], ["OUTER", 433, 384], ["RICHMOND", 433, 455], ["INNER SUNSET", 1392, 1167]],
  E: [["HAIGHT-ASHBURY", 672, 793], ["THE CASTRO", 1133, 1161]],
  F: [["SOUTH OF", 807, 345], ["MARKET", 808, 417], ["MISSION BAY", 1250, 622], ["MISSION", 485, 1171], ["DISTRICT", 485, 1241]],
  G: [["OUTER SUNSET", 476, 203], ["SUNSET DISTRICT", 747, 590], ["FOREST HILL", 1491, 562]],
  H: [["NOE VALLEY", 1178, 433], ["GLEN PARK", 1231, 985]],
  I: [["DOGPATCH", 1360, 40], ["BERNAL HEIGHTS", 380, 835]],
};
const STREETS = {
  B: [["Divisadero St", 900, 937, 82], ["Fillmore St", 1121, 870, 80]],
  C: [["Gough St", 70, 863, 80], ["Bay St", 292, 452, -7], ["Columbus Ave", 641, 645, 41], ["Hyde St", 368, 903, 80], ["Pine St", 445, 1090, -7], ["Howard St", 1130, 1183, -45], ["Folsom St", 1180, 1243, -45]],
  D: [["California St", 1452, 98, -4], ["Geary St", 88, 352, -3], ["Balboa St", 72, 521, -3], ["Fulton St", 60, 688, -2], ["25th Ave", 808, 493, 86], ["Geary St", 1410, 281, -3], ["Balboa St", 1436, 444, -3], ["Lincoln Way", 1285, 950, -3], ["Lincoln Way", 164, 1012, -3], ["Irving St", 209, 1090, -3]],
  E: [["Turk St", 507, 407, -6], ["Fulton St", 155, 593, -7], ["Fell St", 722, 630, -6], ["Oak St", 992, 628, -6], ["Fell St", 1302, 537, -6], ["Webster St", 1297, 305, 82], ["Frederick St", 560, 910, -8], ["17th St", 694, 1122, -3], ["Castro St", 1098, 868, 79]],
  F: [["Dolores St", 82, 993, 86], ["Turk St", 438, 203, -6], ["4th St", 916, 187, 47], ["8th St", 604, 494, 47], ["9th St", 530, 525, 47], ["7th St", 914, 650, 47], ["Valencia St", 237, 971, 85], ["Mission St", 315, 957, 85], ["Guerrero St", 180, 1287, 85]],
  G: [["Noriega St", 175, 305, -2], ["Taraval St", 221, 800, -2], ["Ocean Ave", 821, 1219, -2]],
  I: [["24th St", 600, 325, -3], ["Cesar Chavez St", 494, 525, -2]],
};
const GREENS = {
  A: [["Presidio of", 1424, 984], ["San Francisco", 1420, 1062]],
  D: [["End", 119, 98], ["Golden", 749, 745], ["Gate Park", 747, 822]],
  F: [["Union Square", 736, 38]],
  H: [["Twin Peaks", 691, 333]],
};
const PLACES = {
  A: [["Fort Point", 845, 191], ["House of Air", 1089, 443]],
  B: [["Fort Mason Center", 878, 330], ["for Arts & Culture", 902, 408], ["The Walt Disney", 636, 558], ["Family Museum", 632, 636]],
  C: [["PIER 39", 845, 278], ["Coit Tower", 1040, 555]],
  G: [["16th Avenue Tiled Steps", 872, 75]],
};
const PARK_NAMES = {
  H: [["Vista Del", 1075, 713], ["Monte", 1074, 790]],
};

const STYLES = {
  hood: { size: 72.6, cls: "fill-[#668f82] stroke-[#f1f5f3] font-medium" },
  street: { size: 60, cls: "fill-[#757978] stroke-[#f3f3f3]" },
  green: { size: 78, cls: "fill-[#1f6b52] stroke-transparent italic" },
  place: { size: 78, cls: "fill-[#363f3c] stroke-transparent" },
  park: { size: 78, cls: "fill-[#3a5a51] stroke-[#f1f3f2]" },
};

function Labels({ data, kind }) {
  const s = STYLES[kind];
  return Object.entries(data).map(([id, list]) => (
    <Tile id={id} key={id}>
      {list.map(([t, x, y, r = 0], i) => (
        <text key={i} transform={`translate(${x} ${y}) rotate(${r})`} y={s.size * 0.355} fontSize={s.size} textAnchor="middle" paintOrder="stroke" strokeWidth="12" strokeLinejoin="round" className={s.cls}>
          {t}
        </text>
      ))}
    </Tile>
  ));
}

const Areas = ({ data, cls }) =>
  Object.entries(data).map(([id, list]) => (
    <Tile id={id} key={id}>
      {list.map((p, i) => <polygon key={i} points={p} className={cls} />)}
    </Tile>
  ));

const Lines = ({ data, width, cls }) =>
  Object.entries(data).map(([id, d]) => (
    <Tile id={id} key={id}>
      <path d={d} fill="none" strokeWidth={width} strokeLinecap="round" strokeLinejoin="round" className={cls} />
    </Tile>
  ));

/* ---------- point-of-interest glyphs, centred on 0,0 ---------- */
const GLYPHS = {
  rook: <path d="M-20-24h8v6h7v-6h10v6h7v-6h8v13l-5 5h-30l-5-5zM-12-3h24l2 17 10 3v7h-48v-7l10-3z" />,
  square: <path d="M-15-15h30v30h-30z" />,
  museum: <path fillRule="evenodd" d="M0-28l27 18v4h-54v-4zM-20-6h40v19h7v7h-54v-7h7zM-11-2v13h22v-13zM-6 1h4v2h4v-2h4v8h-4v-3h-4v3h-4z" />,
  govt: <path d="M0-28l25 15v5h-50v-5zM-19-5h8v16h-8zM-4-5h8v16h-8zM11-5h8v16h-8zM-22 14h44v7h-44z" />,
  music: (
    <g>
      <circle cx="-12" cy="8" r="9" />
      <circle cx="12" cy="17" r="9" />
      <path d="M-9-26L21-11V17H14V-3L-3-12V8H-9z" />
    </g>
  ),
  camera: <path fillRule="evenodd" d="M-8-10h5l4-6h16l4 6h6v31h-48v-20h8v-5h5zM8-4a9 9 0 1 0 .1 0zM-19-22h5v6h6v5h-6v6h-5v-6h-6v-5h6z" />,
  bag: <path fillRule="evenodd" d="M-20-9h8c0-17 24-17 24 0h8v30h-40zM-6-9h12c0-9-12-9-12 0zM-12 3c2 15 22 15 24 0h-5c-2 8-12 8-14 0z" />,
  tree: <path d="M0-27l13 16h-6l11 13h-7l10 13h-18v10h-6v-10h-18l10-13h-7l11-13h-6z" />,
  graves: <path d="M-27 21v-17a7 9 0 0 1 14 0v17zM-9 21v-30a9 13 0 0 1 18 0v30zM13 21v-17a7 9 0 0 1 14 0v17z" />,
  masks: <path fillRule="evenodd" d="M-24-5l6 4h12l6-4v15a12 12 0 0 1-24 0zM-18 5v4h4v-4zM-10 5v4h4v-4zM1-17l7 1 9-4 8-3-2 22a10 10 0 0 1-18 6v-10h-4zM9-10v4h4v-4zM17-11v4h4v-4z" />,
  paw: <path d="M0-1c9 0 21 12 15 20-5 6-25 6-30 0-6-8 6-20 15-20zM-20-9a6 7 0 1 0 .1 0zM-8-23a6 8 0 1 0 .1 0zM9-23a6 8 0 1 0 .1 0zM21-9a6 7 0 1 0 .1 0z" />,
};

const POIS = [
  ["A", 1071, 192, "rook"], ["A", 1359, 444, "square"], ["B", 306, 597, "museum"], ["B", 1257, 369, "music"],
  ["C", 660, 279, "bag", "fill-[#7ecbb4]"], ["C", 351, 567, "camera"], ["C", 801, 555, "rook"], ["C", 594, 897, "museum"],
  ["C", 810, 1073, "camera"], ["C", 738, 1176, "tree", "fill-[#569f8a]"], ["E", 45, 765, "museum"],
  ["F", 123, 129, "graves"], ["F", 345, 96, "music"], ["F", 639, 195, "masks"], ["F", 330, 348, "govt"], ["F", 258, 480, "masks"],
  ["G", 1206, 165, "camera"], ["G", 90, 1188, "paw"],
];

const BART = [["C", 966, 1132], ["F", 725, 120], ["F", 509, 327], ["H", 1173, 1191], ["I", 360, 342]];
const TRAINS = [["F", 1185, 462], ["G", 261, 1182]];
const US101 = [["B", 61, 558], ["B", 1143, 657], ["C", 240, 1178], ["F", 624, 789], ["I", 903, 312], ["I", 729, 975]];
const INTERSTATES = [["F", 1068, 270, "80", 96], ["F", 1206, 935, "280", 138], ["I", 1277, 465, "280", 138]];

/* marker tips, north to south */
const PINS = [
  ["C", 852, 1041], ["C", 750, 1104], ["C", 876, 1185], ["F", 375, 120], ["F", 894, 125],
  ["E", 234, 248], ["D", 1077, 284], ["D", 345, 494], ["D", 1017, 1034], ["D", 927, 1043], ["G", 1017, 762],
];

const At = ({ id, x, y, children }) => (
  <Tile id={id}>
    <g transform={`translate(${x} ${y})`}>{children}</g>
  </Tile>
);

function BobaMap() {
  return (
    <svg viewBox="1444 178 1354 1212" className="block h-[1212px] w-[1354px] font-[Roboto,sans-serif]" role="img" aria-label="Map of San Francisco">
      <defs>
        <linearGradient id="pin" x1="0" y1="0" x2="0" y2="1">
          <stop offset="0" stopColor="#fb7368" />
          <stop offset="1" stopColor="#f13a31" />
        </linearGradient>
      </defs>
      <rect x="1444" y="178" width="1354" height="1212" className="fill-[#ebebeb]" />
      <path
        className="fill-[#c6e0d7]"
        d="M1444 178H2798V503L2757 453 2720 410 2708 383 2672 335 2650 305 2615 285 2580 270 2540 262 2510 262 2443 266V300L2387 303 2378 285 2372 267 2350 270 2367 270 2357 267 2303 285 2277 293 2215 292 2190 287 2147 282 2117 289 2097 295 2050 298 2000 315 1950 320 1920 305 1900 293 1883 287 1875 275 1860 263 1833 257 1813 256 1797 248 1778 248 1772 270 1767 303 1757 350 1747 383 1732 412V417L1713 470 1697 513 1683 529 1670 547H1637L1615 567 1592 573 1582 569 1563 575 1523 558 1503 568 1450 565 1444 572Z"
      />
      <Areas data={PRESIDIO} cls="fill-[#b1d9cd]" />
      <Areas data={PALE} cls="fill-[#d1e8e0]" />
      <Areas data={GREY} cls="fill-[#e1e3e2]" />
      <Lines data={RAIL} width={4} cls="stroke-[#c8cac9]" />
      {Object.entries(GRIDS).map(([id, list]) => (
        <Tile id={id} key={id}>
          <path d={list.map(gridPath).join("")} fill="none" strokeWidth="4.5" className="stroke-white" />
        </Tile>
      ))}
      <Areas data={CAMPUS} cls="fill-[#edf4f3]" />
      <Areas data={PARKS} cls="fill-[#b1d9cd]" />
      <Areas data={MINT} cls="fill-[#c4dfd6]" />
      <Areas data={LAND} cls="fill-[#ebebeb]" />
      <Tile id="C">
        <path d="M72,300Q65,190 150,190" fill="none" strokeWidth="9" className="stroke-[#ebebeb]" />
        <path d="M205,207L270,270" fill="none" strokeWidth="4" className="stroke-[#ebebeb]" />
      </Tile>
      <Lines data={LANES} width={5} cls="stroke-white" />
      {Object.entries(ROADS).map(([id, [d, w]]) => (
        <Lines key={id} data={{ [id]: d }} width={w} cls="stroke-white" />
      ))}
      <Tile id="D"><path d="M405,965L422,1260" strokeWidth="16" className="stroke-white" /></Tile>
      <Tile id="G"><path d="M422,0L485,1230" strokeWidth="19" className="stroke-white" /></Tile>
      <Lines data={MARKET} width={18} cls="stroke-white" />
      <Lines data={ARTERIAL} width={29} cls="stroke-[#a8cdc1]" />
      <Lines data={ARTERIAL} width={20} cls="stroke-[#d1e8e0]" />
      <Lines data={FREEWAY} width={31} cls="stroke-[#9ac5b8]" />
      <Lines data={FREEWAY} width={22} cls="stroke-[#bfe0d6]" />

      <Labels data={STREETS} kind="street" />
      <Labels data={HOODS} kind="hood" />
      <Labels data={GREENS} kind="green" />
      <Labels data={PLACES} kind="place" />
      <Labels data={PARK_NAMES} kind="park" />
      <Tile id="A">
        <path id="strait" d="M126,364C220,345 340,265 500,128" fill="none" />
        <text fontSize="69" className="fill-[#7aa698] italic" letterSpacing="3"><textPath href="#strait">Golden Gate</textPath></text>
      </Tile>
      <Tile id="H">
        <path id="clarendon" d="M406,372C440,200 470,105 650,45" fill="none" />
        <path id="portola" d="M145,910Q310,885 430,790" fill="none" />
        <g fontSize="60" className="fill-[#757978] stroke-[#f3f3f3]" paintOrder="stroke" strokeWidth="12" strokeLinejoin="round">
          <text paintOrder="stroke"><textPath href="#clarendon">Clarendon Ave</textPath></text>
          <text paintOrder="stroke"><textPath href="#portola">Portola Dr</textPath></text>
        </g>
      </Tile>
      <Tile id="G">
        <g fontSize="66" textAnchor="middle" className="fill-[#2a5f50]">
          <text transform="translate(757 1166) rotate(-2)">Sloat Blvd</text>
          <text transform="translate(322 1284) rotate(-52)">Blvd</text>
        </g>
      </Tile>

      {POIS.map(([id, x, y, g, cls], i) => (
        <At key={i} id={id} x={x} y={y}>
          <circle cy="3" r="39" className="fill-black/20" />
          <circle r="39" className={cls || "fill-[#6c887e]"} />
          <g className="fill-white">{GLYPHS[g]}</g>
        </At>
      ))}
      <At id="I" x={828} y={192}>
        <circle cy="3" r="39" className="fill-black/20" />
        <circle r="39" className="fill-[#5cb89c]" />
        <text y="20" fontSize="56" textAnchor="middle" className="fill-white font-medium">H</text>
      </At>
      {BART.map(([id, x, y], i) => (
        <At key={i} id={id} x={x} y={y}>
          <rect x="-22" y="-22" width="44" height="44" rx="4" strokeWidth="5" className="fill-white stroke-[#2fb08c]" />
          <path d="M-12-9V8H-3V-2H-12" fill="none" strokeWidth="4.500" className="stroke-[#222]" />
          <path d="M2-2H11V8H2Z" fill="none" strokeWidth="4" className="stroke-[#2fb08c]" />
        </At>
      ))}
      {TRAINS.map(([id, x, y], i) => (
        <At key={i} id={id} x={x} y={y}>
          <rect x="-24" y="-21" width="48" height="48" rx="4" className="fill-black/15" />
          <rect x="-24" y="-24" width="48" height="48" rx="4" className="fill-[#38c9a0]" />
          <path fillRule="evenodd" className="fill-white" d="M-9-18H9Q15-18 15-12V11H10L14 17H8L5 12H-5L-8 17H-14L-10 11H-15V-12Q-15-18-9-18ZM-10-12V0H10V-12ZM-10 4V8H-5V4ZM5 4V8H10V4Z" />
        </At>
      ))}
      {US101.map(([id, x, y], i) => (
        <At key={i} id={id} x={x} y={y}>
          <path d="M-46-46Q-30-34-16-42Q-6-39 0-46Q6-39 16-42Q30-34 46-46L58-30Q50-14 57-2Q66 36 34 42Q12 41 0 46Q-12 41-34 42Q-66 36-57-2Q-50-14-58-30Z" strokeWidth="5" strokeLinejoin="round" className="fill-white stroke-[#5f6463]" />
          <text y="20" fontSize="52" textAnchor="middle" className="fill-[#2f3432]">101</text>
        </At>
      ))}
      <At id="G" x={1125} y={840}>
        <rect x="-49" y="-40" width="98" height="80" rx="38" strokeWidth="5" className="fill-white stroke-[#5f6463]" />
        <text y="19" fontSize="52" textAnchor="middle" className="fill-[#2f3432]">1</text>
      </At>
      {INTERSTATES.map(([id, x, y, n, w], i) => (
        <At key={i} id={id} x={x} y={y}>
          <g transform={`scale(${w / 96} 1)`}>
            <path d="M-40-47Q-28-38-18-42Q-8-38 0-46Q8-38 18-42Q28-38 40-47L47-30H-47Z" className="fill-[#8fb5aa]" />
            <rect x="-47" y="-31" width="94" height="6" className="fill-white" />
            <path d="M-48-25H48Q52 28 0 48Q-52 28-48-25Z" className="fill-[#6a998b]" />
          </g>
          <text y="24" fontSize="52" textAnchor="middle" className="fill-white font-bold">{n}</text>
        </At>
      ))}
      {PINS.map(([id, x, y], i) => (
        <At key={i} id={id} x={x} y={y}>
          <path d="M0 0C-4-76-63-112-63-172A63 63 0 0 1 63-172C63-112 4-76 0 0Z" fill="url(#pin)" strokeWidth="4" strokeLinejoin="round" className="stroke-[#b5382f]" />
          <circle cy="-171" r="21.500" className="fill-[#591310]" />
        </At>
      ))}
    </svg>
  );
}

export default function App() {
  return (
    <main className="h-[1390px] w-full overflow-hidden bg-[#efebea]">
      <h1 className="h-[178px] pt-10 text-center font-[Roboto,sans-serif] text-[112px] leading-[112px] font-bold tracking-[4.15px] text-[#6b584f] uppercase">
        Boba Tea Finder App
      </h1>
      <div className="grid grid-cols-[1354px_1354px] gap-[60px] pl-[30px]">
        <section>
          <input
            type="text"
            placeholder="Search for a nearby Boba Tea:"
            className="block h-[100px] w-full rounded-lg border-t-2 border-[#f3f1f0] bg-white px-6 pb-1 font-['Noto_Sans_CJK_JP',sans-serif] text-[30px] outline-none placeholder:text-[#949494]"
          />
          <h2 className="mt-[42px] text-center font-[Roboto,sans-serif] text-[72px] leading-[72px] font-bold tracking-[4.1px] text-[#6b584f] uppercase">
            Nearby Boba Teas
          </h2>
          <ul className="mt-[23px] pl-20 text-center font-['Noto_Sans_CJK_JP',sans-serif] text-[26px] leading-[76px] font-black tracking-[3.05px] text-[#d4ab60] uppercase">
            {SHOPS.map((s) => (
              <li key={s}>{s}</li>
            ))}
          </ul>
        </section>
        <BobaMap />
      </div>
    </main>
  );
}
